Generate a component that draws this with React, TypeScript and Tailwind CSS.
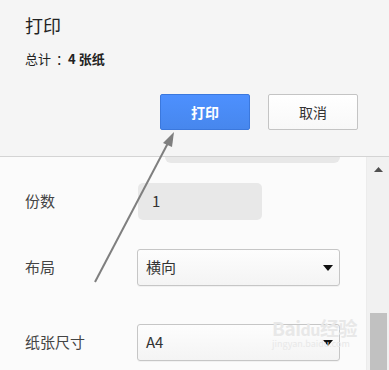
import React from "react";

const font = { fontFamily: '"Noto Sans CJK SC", "Noto Sans", sans-serif' };

function Caret() {
  return (
    <svg width="10" height="6" viewBox="0 0 10 6" className="shrink-0">
      <path d="M0 0 L10 0 L5 6 Z" fill="#111" />
    </svg>
  );
}

function Select({ value }: { value: string }) {
  return (
    <div className="w-[203px] h-[37px] border border-[#c6c6c6] rounded-[3px] bg-gradient-to-b from-[#fdfdfd] to-[#f4f4f4] flex items-center justify-between pl-[8px] pr-[6px] shadow-[0_1px_0_rgba(0,0,0,0.04)]">
      <span className="text-[15px] text-[#333]">{value}</span>
      <Caret />
    </div>
  );
}

export default function App() {
  return (
    <div className="relative w-[389px] h-[370px] overflow-hidden bg-[#fbfbfb]" style={font}>
      {/* header */}
      <div className="h-[157px] bg-[#f5f5f5] border-b border-[#d4d4d4] pl-[25px] pt-[13px] flex flex-col">
        <div className="text-[18px] leading-[24px] text-[#222]">打印</div>
        <div className="mt-[13px] text-[13px] leading-[18px] text-[#222] flex items-center">
          <span>总计</span>
          <span className="mx-[5px]">：</span>
          <span className="font-bold -ml-[6px]">4 张纸</span>
        </div>
        <div className="mt-[26px] flex pl-[135px] gap-[18px]">
          <button className="w-[90px] h-[36px] rounded-[2px] border border-[#3b78dd] bg-gradient-to-b from-[#4d90fe] to-[#4787ed] text-white text-[14px] font-bold">
            打印
          </button>
          <button className="w-[90px] h-[36px] rounded-[2px] border border-[#c4c4c4] bg-gradient-to-b from-[#ffffff] to-[#f8f8f8] text-[#333] text-[14px]">
            取消
          </button>
        </div>
      </div>

      {/* body */}
      <div className="flex h-[213px]">
        <div className="flex-1 flex flex-col">
          <div className="ml-[165px] w-[175px] h-[6px] bg-[#e8e8e8] rounded-b-[6px]" />
          <div className="mt-[20px] flex items-center pl-[25px]">
            <div className="w-[113px] text-[15px] text-[#444]">份数</div>
            <div className="w-[124px] h-[37px] rounded-[5px] bg-[#e8e8e8] flex items-center pl-[14px] text-[15px] text-[#333]">
              1
            </div>
          </div>
          <div className="mt-[29px] flex items-center pl-[25px]">
            <div className="w-[112px] text-[15px] text-[#444]">布局</div>
            <Select value="横向" />
          </div>
          <div className="mt-[38px] flex items-center pl-[25px]">
            <div className="w-[112px] text-[15px] text-[#444]">纸张尺寸</div>
            <Select value="A4" />
          </div>
        </div>
        {/* scrollbar */}
        <div className="w-[23px] bg-[#f1f1f1] border-l border-[#ececec] flex flex-col items-center">
          <svg width="9" height="5" viewBox="0 0 9 5" className="mt-[10px]">
            <path d="M0 5 L9 5 L4.5 0 Z" fill="#505050" />
          </svg>
          <div className="mt-[141px] w-[17px] flex-1 bg-[#c1c1c1]" />
        </div>
      </div>

      {/* watermark */}
      <div className="absolute left-[272px] top-[318px] pointer-events-none flex flex-col leading-none">
        <span className="text-[19px] font-bold text-[#e8e8e8] tracking-tight">Bai<span className="text-[16px]">du</span>经验</span>
        <span className="text-[9px] text-[#e8e8e8] mt-[2px]">jingyan.baidu.com</span>
      </div>

      {/* annotation arrow */}
      <svg className="absolute left-0 top-0 pointer-events-none" width="389" height="370">
        <line x1="95" y1="282" x2="168" y2="143" stroke="#7f7f7f" strokeWidth="2" />
        <path d="M174 132 L163 143 L172 147 Z" fill="#7f7f7f" />
      </svg>
    </div>
  );
}
